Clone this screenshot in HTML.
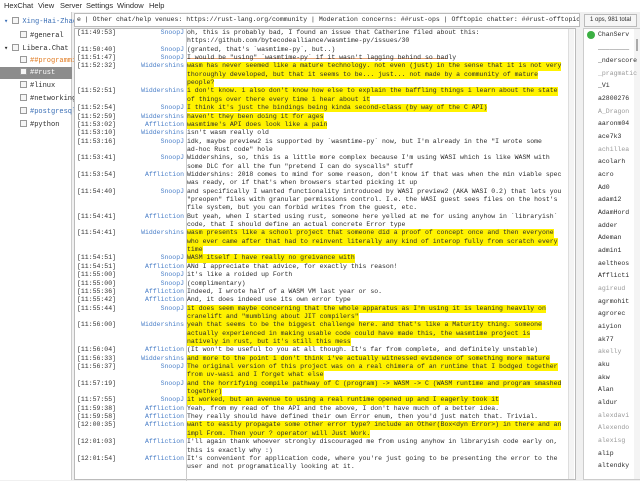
<!DOCTYPE html>
<html><head><meta charset="utf-8"><style>
*{margin:0;padding:0;box-sizing:border-box}
body{width:640px;height:480px;background:#f0f0f0;font-family:"Liberation Mono","DejaVu Sans Mono",monospace;position:relative;overflow:hidden;color:#2b2b2b}
.menu{position:absolute;left:0;top:0;width:640px;height:12px;background:#fff;font-family:"Liberation Sans",sans-serif;font-size:7.5px;line-height:12px}
.menu span{position:absolute;top:0}
.tree{position:absolute;left:0;top:12px;width:72px;height:468px;background:#fff;border-right:1px solid #ccc;font-size:7px}
.tree div{position:absolute;height:12px;line-height:12px;white-space:nowrap;overflow:hidden;width:72px}
.ic{display:inline-block;width:7px;height:7px;border:1px solid #999;vertical-align:-1px;margin-right:3px;background:#f6f6f6}
.topic{position:absolute;left:74px;top:13px;width:506px;height:14px;background:#fff;border:1px solid #bbb;font-size:6.5px;line-height:12px;padding-left:2px;white-space:nowrap;overflow:hidden}
.ops{position:absolute;left:584px;top:14px;width:53px;height:13px;border:1px solid #bbb;font-family:"Liberation Sans",sans-serif;font-size:6px;line-height:11px;text-align:center;background:#f6f6f6}
.chat{position:absolute;left:74px;top:28px;width:502px;height:452px;background:#fff;border:1px solid #bbb;font-size:6.5px}
.sep{position:absolute;left:111px;top:0;width:1px;height:452px;background:#ccc}
.r{position:absolute;left:0;height:8.35px;line-height:8.35px;white-space:pre;width:500px}
.t{position:absolute;left:3px;color:#333}
.n{position:absolute;right:390px;color:#4a7fc8}
.m{position:absolute;left:113px}
.h{background:#fff200}
.ul{position:absolute;left:583px;top:28px;width:57px;height:452px;background:#fff;border:1px solid #ccc;font-size:6.5px}
.ul div{position:absolute;left:14px;height:12px;line-height:12px;white-space:nowrap}
.g{color:#9a9a9a}
</style></head><body>
<div class="menu"><span style="left:4px">HexChat</span><span style="left:38px">View</span><span style="left:60px">Server</span><span style="left:86px">Settings</span><span style="left:117px">Window</span><span style="left:149px">Help</span></div>
<div class="tree">
<div style="top:4px;left:4px;color:#3b6fb6">▾ <span class="ic"></span>Xing-Hai-Zhao</div>
<div style="top:18px;left:20px"><span class="ic"></span>#general</div>
<div style="top:31px;left:4px">▾ <span class="ic"></span>Libera.Chat</div>
<div style="top:43px;left:20px;color:#e07a20"><span class="ic"></span>##programming</div>
<div style="top:55px;left:0;width:72px;background:#8c8c8c;color:#fff;padding-left:20px"><span class="ic"></span>##rust</div>
<div style="top:68px;left:20px"><span class="ic"></span>#linux</div>
<div style="top:81px;left:20px"><span class="ic"></span>#networking</div>
<div style="top:94px;left:20px;color:#3b6fb6"><span class="ic"></span>#postgresql</div>
<div style="top:107px;left:20px"><span class="ic"></span>#python</div>
</div>
<div class="topic">e | Other chat/help venues: https://rust-lang.org/community | Moderation concerns: ##rust-ops | Offtopic chatter: ##rust-offtopic</div>
<div class="ops">1 ops, 981 total</div>
<div class="chat">
<div class="sep"></div>
<div style="position:absolute;left:112px;top:29px;width:260px;height:1px;background:#e0a070"></div>
<div style="position:absolute;right:1px;top:0;width:6px;height:450px;background:#f4f4f4;border-left:1px solid #ddd"></div>
</div>
<div class="ul">
<div style="position:absolute;left:50px;top:0;width:6px;height:450px;background:#f4f4f4"></div>
<div style="position:absolute;left:52px;top:10px;width:2px;height:12px;background:#aaa"></div>
<div style="left:3px;top:2px;width:8px;height:8px;border-radius:50%;background:#3cb043;position:absolute"></div>
<div style="top:0">ChanServ</div>
<div style="top:13px">________</div>
<div style="top:26px">_nderscore</div>
<div style="top:39px" class="g">_pragmatic</div>
<div style="top:51px">_Vi</div>
<div style="top:64px">a2800276</div>
<div style="top:77px" class="g">A_Dragon</div>
<div style="top:89px">aaronm04</div>
<div style="top:102px">ace7k3</div>
<div style="top:115px" class="g">achillea</div>
<div style="top:127px">acolarh</div>
<div style="top:140px">acro</div>
<div style="top:153px">Ad0</div>
<div style="top:165px">adam12</div>
<div style="top:178px">AdamHord</div>
<div style="top:191px">adder</div>
<div style="top:203px">Ademan</div>
<div style="top:216px">admin1</div>
<div style="top:229px">aeltheos</div>
<div style="top:241px">Afflicti</div>
<div style="top:254px" class="g">agireud</div>
<div style="top:267px">agrmohit</div>
<div style="top:279px">agrorec</div>
<div style="top:292px">aiyion</div>
<div style="top:305px">ak77</div>
<div style="top:317px" class="g">akelly</div>
<div style="top:330px">aku</div>
<div style="top:343px">akw</div>
<div style="top:355px">Alan</div>
<div style="top:368px">aldur</div>
<div style="top:381px" class="g">alexdavi</div>
<div style="top:393px" class="g">Alexendo</div>
<div style="top:406px" class="g">alexisg</div>
<div style="top:419px">alip</div>
<div style="top:431px">altendky</div>
</div>
<div class="chat" style="background:transparent;border:none">
<div class="r" style="top:1px"><span class="t">[11:49:53]</span><span class="n">SnoopJ</span><span class="m">oh, this is probably bad, I found an issue that Catherine filed about this:</span></div>
<div class="r" style="top:9.35px"><span class="m">https://github.com/bytecodealliance/wasmtime-py/issues/30</span></div>
<div class="r" style="top:17.7px"><span class="t">[11:50:40]</span><span class="n">SnoopJ</span><span class="m">(granted, that's `wasmtime-py`, but..)</span></div>
<div class="r" style="top:26.05px"><span class="t">[11:51:47]</span><span class="n">SnoopJ</span><span class="m">I would be "using" `wasmtime-py` if it wasn't lagging behind so badly</span></div>
<div class="r" style="top:34.4px"><span class="t">[11:52:32]</span><span class="n">Widdershins</span><span class="m h">wasm has never seemed like a mature technology. not even (just) in the sense that it is not very</span></div>
<div class="r" style="top:42.75px"><span class="m h">thoroughly developed, but that it seems to be... just... not made by a community of mature</span></div>
<div class="r" style="top:51.1px"><span class="m h">people?</span></div>
<div class="r" style="top:59.45px"><span class="t">[11:52:51]</span><span class="n">Widdershins</span><span class="m h">i don't know. i also don't know how else to explain the baffling things i learn about the state</span></div>
<div class="r" style="top:67.8px"><span class="m h">of things over there every time i hear about it</span></div>
<div class="r" style="top:76.15px"><span class="t">[11:52:54]</span><span class="n">SnoopJ</span><span class="m h">I think it's just the bindings being kinda second-class (by way of the C API)</span></div>
<div class="r" style="top:84.5px"><span class="t">[11:52:59]</span><span class="n">Widdershins</span><span class="m h">haven't they been doing it for ages</span></div>
<div class="r" style="top:92.85px"><span class="t">[11:53:02]</span><span class="n">Affliction</span><span class="m h">wasmtime's API does look like a pain</span></div>
<div class="r" style="top:101.2px"><span class="t">[11:53:10]</span><span class="n">Widdershins</span><span class="m">isn't wasm really old</span></div>
<div class="r" style="top:109.55px"><span class="t">[11:53:16]</span><span class="n">SnoopJ</span><span class="m">idk, maybe preview2 is supported by `wasmtime-py` now, but I'm already in the "I wrote some</span></div>
<div class="r" style="top:117.9px"><span class="m">ad-hoc Rust code" hole</span></div>
<div class="r" style="top:126.25px"><span class="t">[11:53:41]</span><span class="n">SnoopJ</span><span class="m">Widdershins, so, this is a little more complex because I'm using WASI which is like WASM with</span></div>
<div class="r" style="top:134.6px"><span class="m">some DLC for all the fun "pretend I can do syscalls" stuff</span></div>
<div class="r" style="top:142.95px"><span class="t">[11:53:54]</span><span class="n">Affliction</span><span class="m">Widdershins: 2018 comes to mind for some reason, don't know if that was when the min viable spec</span></div>
<div class="r" style="top:151.3px"><span class="m">was ready, or if that's when browsers started picking it up</span></div>
<div class="r" style="top:159.65px"><span class="t">[11:54:40]</span><span class="n">SnoopJ</span><span class="m">and specifically I wanted functionality introduced by WASI preview2 (AKA WASI 0.2) that lets you</span></div>
<div class="r" style="top:168px"><span class="m">"preopen" files with granular permissions control. I.e. the WASI guest sees files on the host's</span></div>
<div class="r" style="top:176.35px"><span class="m">file system, but you can forbid writes from the guest, etc.</span></div>
<div class="r" style="top:184.7px"><span class="t">[11:54:41]</span><span class="n">Affliction</span><span class="m">But yeah, when I started using rust, someone here yelled at me for using anyhow in `libraryish`</span></div>
<div class="r" style="top:193.05px"><span class="m">code, that I should define an actual concrete Error type</span></div>
<div class="r" style="top:201.4px"><span class="t">[11:54:41]</span><span class="n">Widdershins</span><span class="m h">wasm presents like a school project that someone did a proof of concept once and then everyone</span></div>
<div class="r" style="top:209.75px"><span class="m h">who ever came after that had to reinvent literally any kind of interop fully from scratch every</span></div>
<div class="r" style="top:218.1px"><span class="m h">time</span></div>
<div class="r" style="top:226.45px"><span class="t">[11:54:51]</span><span class="n">SnoopJ</span><span class="m h">WASM itself I have really no greivance with</span></div>
<div class="r" style="top:234.8px"><span class="t">[11:54:51]</span><span class="n">Affliction</span><span class="m">ANd I appreciate that advice, for exactly this reason!</span></div>
<div class="r" style="top:243.15px"><span class="t">[11:55:00]</span><span class="n">SnoopJ</span><span class="m">it's like a roided up Forth</span></div>
<div class="r" style="top:251.5px"><span class="t">[11:55:00]</span><span class="n">SnoopJ</span><span class="m">(complimentary)</span></div>
<div class="r" style="top:259.85px"><span class="t">[11:55:36]</span><span class="n">Affliction</span><span class="m">Indeed, I wrote half of a WASM VM last year or so.</span></div>
<div class="r" style="top:268.2px"><span class="t">[11:55:42]</span><span class="n">Affliction</span><span class="m">And, it does indeed use its own error type</span></div>
<div class="r" style="top:276.55px"><span class="t">[11:55:44]</span><span class="n">SnoopJ</span><span class="m h">it does seem maybe concerning that the whole apparatus as I'm using it is leaning heavily on</span></div>
<div class="r" style="top:284.9px"><span class="m h">cranelift and "mumbling about JIT compilers"</span></div>
<div class="r" style="top:293.25px"><span class="t">[11:56:00]</span><span class="n">Widdershins</span><span class="m h">yeah that seems to be the biggest challenge here. and that's like a Maturity thing. someone</span></div>
<div class="r" style="top:301.6px"><span class="m h">actually experienced in making usable code could have made this, the wasmtime project is</span></div>
<div class="r" style="top:309.95px"><span class="m h">natively in rust, but it's still this mess</span></div>
<div class="r" style="top:318.3px"><span class="t">[11:56:04]</span><span class="n">Affliction</span><span class="m">(It won't be useful to you at all though. It's far from complete, and definitely unstable)</span></div>
<div class="r" style="top:326.65px"><span class="t">[11:56:33]</span><span class="n">Widdershins</span><span class="m h">and more to the point i don't think i've actually witnessed evidence of something more mature</span></div>
<div class="r" style="top:335px"><span class="t">[11:56:37]</span><span class="n">SnoopJ</span><span class="m h">The original version of this project was on a real chimera of an runtime that I bodged together</span></div>
<div class="r" style="top:343.35px"><span class="m h">from uv-wasi and I forget what else</span></div>
<div class="r" style="top:351.7px"><span class="t">[11:57:19]</span><span class="n">SnoopJ</span><span class="m h">and the horrifying compile pathway of C (program) -&gt; WASM -&gt; C (WASM runtime and program smashed</span></div>
<div class="r" style="top:360.05px"><span class="m h">together)</span></div>
<div class="r" style="top:368.4px"><span class="t">[11:57:55]</span><span class="n">SnoopJ</span><span class="m h">it worked, but an avenue to using a real runtime opened up and I eagerly took it</span></div>
<div class="r" style="top:376.75px"><span class="t">[11:59:38]</span><span class="n">Affliction</span><span class="m">Yeah, from my read of the API and the above, I don't have much of a better idea.</span></div>
<div class="r" style="top:385.1px"><span class="t">[11:59:58]</span><span class="n">Affliction</span><span class="m">They really should have defined their own Error enum, then you'd just match that. Trivial.</span></div>
<div class="r" style="top:393.45px"><span class="t">[12:00:35]</span><span class="n">Affliction</span><span class="m h">want to easily propagate some other error type? include an Other(Box&lt;dyn Error&gt;) in there and an</span></div>
<div class="r" style="top:401.8px"><span class="m h">impl From. Then your ? operator will Just Work.</span></div>
<div class="r" style="top:410.15px"><span class="t">[12:01:03]</span><span class="n">Affliction</span><span class="m">I'll again thank whoever strongly discouraged me from using anyhow in libraryish code early on,</span></div>
<div class="r" style="top:418.5px"><span class="m">this is exactly why :)</span></div>
<div class="r" style="top:426.85px"><span class="t">[12:01:54]</span><span class="n">Affliction</span><span class="m">It's convenient for application code, where you're just going to be presenting the error to the</span></div>
<div class="r" style="top:435.2px"><span class="m">user and not programatically looking at it.</span></div>
</div>
</body></html>
